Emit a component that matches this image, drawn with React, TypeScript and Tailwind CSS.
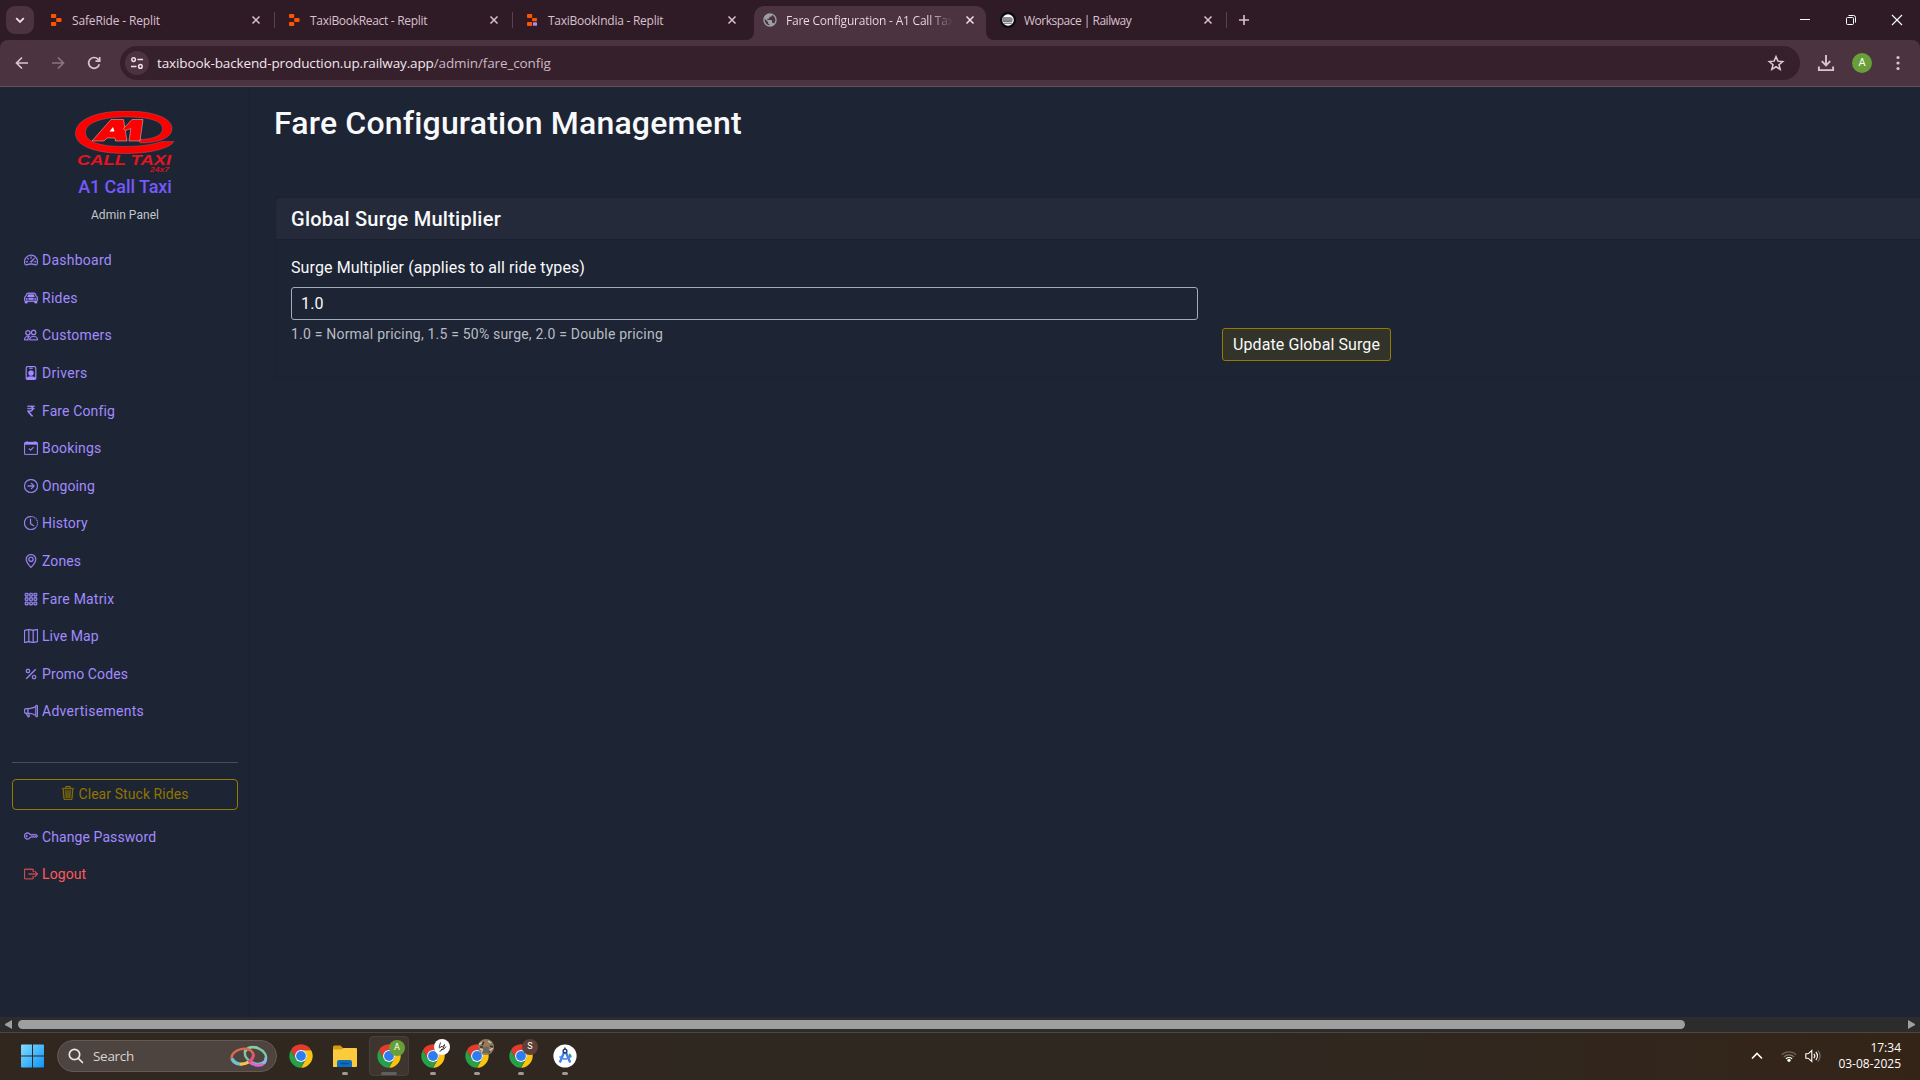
import type { ReactNode } from "react";
import type { IconType } from "react-icons";
import {
  BsArrowRightCircle,
  BsBoxArrowRight,
  BsCalendarCheck,
  BsCarFront,
  BsClockHistory,
  BsCurrencyRupee,
  BsGeoAlt,
  BsGrid3X3Gap,
  BsKey,
  BsMap,
  BsMegaphone,
  BsPeople,
  BsPercent,
  BsPersonBadge,
  BsSpeedometer2,
  BsTrash3,
} from "react-icons/bs";
import { MdPublic } from "react-icons/md";

const navItems: { label: string; icon: IconType; spacing: string }[] = [
  { label: "Dashboard", icon: BsSpeedometer2, spacing: "tracking-[0.25px]" },
  { label: "Rides", icon: BsCarFront, spacing: "tracking-[0.25px]" },
  { label: "Customers", icon: BsPeople, spacing: "tracking-[0.2px]" },
  { label: "Drivers", icon: BsPersonBadge, spacing: "tracking-[0.3px]" },
  { label: "Fare Config", icon: BsCurrencyRupee, spacing: "tracking-[0.12px]" },
  { label: "Bookings", icon: BsCalendarCheck, spacing: "tracking-[0.16px]" },
  { label: "Ongoing", icon: BsArrowRightCircle, spacing: "tracking-[0.1px]" },
  { label: "History", icon: BsClockHistory, spacing: "tracking-[0.2px]" },
  { label: "Zones", icon: BsGeoAlt, spacing: "tracking-[0.1px]" },
  { label: "Fare Matrix", icon: BsGrid3X3Gap, spacing: "tracking-[0.2px]" },
  { label: "Live Map", icon: BsMap, spacing: "tracking-[0.05px]" },
  { label: "Promo Codes", icon: BsPercent, spacing: "tracking-[0.11px]" },
  { label: "Advertisements", icon: BsMegaphone, spacing: "tracking-[0.28px]" },
];

function CloseIcon() {
  return (
    <svg width="16" height="16" viewBox="0 0 16 16" className="shrink-0" fill="none" stroke="currentColor" strokeWidth="1.5">
      <path d="M4.5 4.5l7 7M11.5 4.5l-7 7" />
    </svg>
  );
}

function ReplitIcon({ accent = false }: { accent?: boolean }) {
  return (
    <svg width="16" height="16" viewBox="0 0 16 16" className="shrink-0">
      <rect x="3" y="2" width="5.2" height="4" rx="0.9" fill="#fd5402" />
      <rect x="3" y="10" width="5.2" height="4" rx="0.9" fill="#fd5402" />
      {accent ? (
        <>
          <rect x="8" y="6" width="5" height="3.2" rx="0.9" fill="#fd5402" />
          <rect x="9" y="10.2" width="4" height="3.6" rx="0.6" fill="#a48bf5" />
        </>
      ) : (
        <rect x="8.2" y="6" width="5.3" height="4" rx="0.9" fill="#fd5402" />
      )}
    </svg>
  );
}

function RailwayIcon() {
  return (
    <svg width="16" height="16" viewBox="0 0 16 16" className="shrink-0">
      <circle cx="8" cy="8" r="8" fill="#0d0b10" />
      <circle cx="8" cy="8" r="5.8" fill="#fff" />
      <path d="M3 5h6.500c2.300 0 3.300 1.200 3.300 2.500 0 1.200-1 1.700-2 1.700H2.400C2.100 7.500 2.400 6 3 5z" fill="#8b8b90" />
      <path d="M2.800 9.300h9.500M3.800 11.200h8" fill="none" stroke="#4a4a50" strokeWidth="0.9" />
    </svg>
  );
}

function Tab({ icon, title, spacing }: { icon: ReactNode; title: string; spacing: string }) {
  return (
    <div className="flex w-[238px] items-center">
      <div className="ml-[11px]">{icon}</div>
      <span className={`ml-[8px] flex-1 whitespace-nowrap pt-[2px] ${spacing}`}>{title}</span>
      <CloseIcon />
      <div className="w-[11px]" />
    </div>
  );
}

function Separator() {
  return <div className="-ml-px h-4 w-px shrink-0 bg-[#57434d]" />;
}

function TabStrip() {
  return (
    <div className="flex h-10 items-center bg-[#2e1b25] font-['Open_Sans','Noto_Sans',sans-serif] text-[12px] text-[#dcc0cf]">
      <div className="ml-1.5 flex h-7 w-7 items-center justify-center rounded-[9px] bg-[#4b3440] text-[#f1dfe8]">
        <svg width="12" height="12" viewBox="0 0 12 12" fill="none" stroke="currentColor" strokeWidth="1.8">
          <path d="M2.2 4.2L6 8l3.800-3.800" />
        </svg>
      </div>
      <div className="w-[3px]" />
      <Tab icon={<ReplitIcon />} title="SafeRide - Replit" spacing="tracking-[-0.15px]" />
      <Separator />
      <Tab icon={<ReplitIcon />} title="TaxiBookReact - Replit" spacing="tracking-[-0.3px]" />
      <Separator />
      <Tab icon={<ReplitIcon accent />} title="TaxiBookIndia - Replit" spacing="tracking-[-0.25px]" />
      <div className="-ml-[5px] -mr-[5px] flex h-10 w-[248px] shrink-0 items-end">
        <svg width="8" height="8" viewBox="0 0 8 8" className="shrink-0">
          <path d="M8 0v8H0a8 8 0 0 0 8-8z" fill="#4b3440" />
        </svg>
        <div className="flex h-[34px] w-[232px] items-center rounded-t-[10px] bg-[#4b3440] pb-[7px] pt-[1px] text-[#f1dfe8]">
          <MdPublic size={16} className="ml-2 shrink-0 text-[#9aa0a6]" />
          <span className="ml-[8px] mr-[9px] flex-1 overflow-hidden whitespace-nowrap bg-gradient-to-r from-[#f1dfe8] from-85% to-transparent bg-clip-text pt-[2px] tracking-[-0.22px] text-transparent">
            Fare Configuration - A1 Call Taxi
          </span>
          <CloseIcon />
          <div className="w-2" />
        </div>
        <svg width="8" height="8" viewBox="0 0 8 8" className="shrink-0">
          <path d="M0 0v8h8a8 8 0 0 1-8-8z" fill="#4b3440" />
        </svg>
      </div>
      <Tab icon={<RailwayIcon />} title="Workspace | Railway" spacing="tracking-[-0.5px]" />
      <Separator />
      <svg width="16" height="16" viewBox="0 0 16 16" className="ml-[9px]" fill="none" stroke="currentColor" strokeWidth="1.6">
        <path d="M8 3v10M3 8h10" />
      </svg>
      <div className="ml-auto flex text-white">
        <div className="flex w-[46px] justify-center">
          <svg width="12" height="12" viewBox="0 0 12 12" fill="none" stroke="currentColor">
            <path d="M1 5.500h10" />
          </svg>
        </div>
        <div className="flex w-[46px] justify-center">
          <svg width="12" height="12" viewBox="0 0 12 12" fill="none" stroke="currentColor">
            <rect x="1.500" y="3.500" width="7" height="7" rx="1" />
            <path d="M3.500 1.500h5a2 2 0 0 1 2 2v5" />
          </svg>
        </div>
        <div className="flex w-[46px] justify-center">
          <svg width="12" height="12" viewBox="0 0 12 12" fill="none" stroke="currentColor" strokeWidth="1.100">
            <path d="M1 1l10 10M11 1L1 11" />
          </svg>
        </div>
      </div>
    </div>
  );
}

function Toolbar() {
  return (
    <div className="bg-[#2e1b25]">
      <div className="flex h-[47px] items-center rounded-t-[8px] border-b border-[#62515b] bg-[#4b3440] text-[#dfc2d1]">
        <svg width="16" height="16" viewBox="0 0 16 16" className="ml-[14px]" fill="none" stroke="currentColor" strokeWidth="1.700">
          <path d="M14 8H2.500M8 2.500L2.500 8 8 13.500" />
        </svg>
        <svg width="16" height="16" viewBox="0 0 16 16" className="ml-5 text-[#8b7480]" fill="none" stroke="currentColor" strokeWidth="1.700">
          <path d="M2 8h11.500M8 2.500L13.500 8 8 13.500" />
        </svg>
        <svg width="16" height="16" viewBox="0 0 16 16" className="ml-5" fill="none" stroke="currentColor" strokeWidth="1.700">
          <path d="M13.300 9.200A5.400 5.400 0 1 1 12 4.200l1.500 1.500" />
          <path d="M13.700 2v4.200H9.500" />
        </svg>
        <div className="ml-[18px] flex h-[34px] w-[1680px] items-center rounded-full bg-[#35202b]">
          <div className="ml-[5px] flex h-6 w-6 items-center justify-center rounded-full bg-[#4b3440] text-[#f1dfe8]">
            <svg width="14" height="14" viewBox="0 0 14 14" fill="none" stroke="currentColor" strokeWidth="1.500">
              <circle cx="3.600" cy="3.600" r="1.800" />
              <path d="M7.500 3.600H13M1 10.400h5.500" />
              <circle cx="10.400" cy="10.400" r="1.800" />
            </svg>
          </div>
          <span className="ml-2 font-['Open_Sans','Noto_Sans',sans-serif] text-[13.500px] tracking-[-0.12px] text-[#f3e6ed]">
            taxibook-backend-production.up.railway.app<span className="text-[#cdb8c3]">/admin/fare_config</span>
          </span>
          <svg width="18" height="18" viewBox="0 0 24 24" className="ml-auto mr-[15px]" fill="none" stroke="#dccbd4" strokeWidth="2">
            <path d="M12 3.500l2.500 6 6.500.5-5 4.200 1.600 6.300L12 17l-5.600 3.500L8 14.200 3 10l6.500-.5z" />
          </svg>
        </div>
        <svg width="18" height="18" viewBox="0 0 18 18" className="ml-[17px]" fill="none" stroke="currentColor" strokeWidth="1.900">
          <path d="M9 1v10M4.800 7.200L9 11.400l4.200-4.200M1.900 12.500v3.600h14.200v-3.600" />
        </svg>
        <div className="ml-[17px] flex h-5 w-5 items-center justify-center rounded-full bg-[#689f38] font-['Roboto',sans-serif] text-[11px] text-white">A</div>
        <svg width="4" height="16" viewBox="0 0 4 16" className="ml-6" fill="currentColor">
          <circle cx="2" cy="2.500" r="1.600" />
          <circle cx="2" cy="8" r="1.600" />
          <circle cx="2" cy="13.500" r="1.600" />
        </svg>
      </div>
    </div>
  );
}

function TaxiLogo() {
  return (
    <svg width="100" height="62" viewBox="0 0 100 62" className="shrink-0 font-['Liberation_Sans',Arial,sans-serif]">
      <path
        d="M99 30.500C94 38 74 42.500 51 42.500 20 42.500.5 35 .5 22.500.5 9 20 0 51 0c29 0 46 7.500 46 17.500C97 27 84 32 65 32l-1-3.500c13 0 23.500-3.500 23.500-11C87.500 9.500 73 6 51 6 26 6 10.500 12 10.500 21.500c0 9.500 15.500 14 38.500 14 16 0 29-2 38-5z"
        fill="#fe0000"
        stroke="#99a"
        strokeWidth="0.300"
      />
      <path d="M17 30L36 8.500h12.500L52 30H40.500L40 27h-8l-3 3z" fill="#fe0000" stroke="#fff" strokeWidth="0.400" />
      <path d="M34.500 20.500l3.500-4.500 1.500 4.500z" fill="#fff" />
      <path d="M48.500 17.500L57 8.500h11L65 30H54l1.800-12.500-5 2z" fill="#fe0000" stroke="#fff" strokeWidth="0.400" />
      <text x="2" y="54.300" fontSize="14" fontWeight="700" fontStyle="italic" textLength="94" lengthAdjust="spacingAndGlyphs" fill="#e5141e">
        CALL TAXI
      </text>
      <text x="75" y="61" fontSize="6.500" fontWeight="700" fontStyle="italic" textLength="19" lengthAdjust="spacingAndGlyphs" fill="#d0141e">
        24x7
      </text>
    </svg>
  );
}

const iconClass = "mb-px stroke-current [stroke-width:0.35px]";

function Sidebar() {
  return (
    <aside className="flex w-[250px] shrink-0 flex-col border-r border-[#1a202d] text-[14px] text-[#a18bff]">
      <div className="flex flex-col items-center pl-px pt-6">
        <TaxiLogo />
        <div className="mt-[2px] text-[18px] font-medium leading-[24px] tracking-[-0.07px] text-[#7459fb]">A1 Call Taxi</div>
        <div className="mt-[7px] text-[12px] leading-[18px] tracking-[0.04px] text-[#c3c6cc]">Admin Panel</div>
      </div>
      <nav className="mt-[18px]">
        {navItems.map(({ label, icon: Icon, spacing }) => (
          <a key={label} className="flex h-[37.600px] items-center pl-6">
            <Icon size={14} className={iconClass} />
            <span className={`ml-1 ${spacing}`}>{label}</span>
          </a>
        ))}
      </nav>
      <div className="ml-3 mr-[11px] mt-[31px] h-px shrink-0 bg-[#474d5a]" />
      <button className="ml-3 mr-[11px] mt-4 flex h-[31px] items-center justify-center rounded-[4px] border border-[#977b00] text-[#8f7500]">
        <BsTrash3 size={14} className="mb-[3px] stroke-current [stroke-width:0.35px]" />
        <span className="ml-[3px] tracking-[0.07px]">Clear Stuck Rides</span>
      </button>
      <a className="mt-[9px] flex h-[37px] items-center pl-6">
        <BsKey size={14} className="mb-[2px] stroke-current [stroke-width:0.35px]" />
        <span className="ml-1 tracking-[0.09px]">Change Password</span>
      </a>
      <a className="flex h-[37.600px] items-center pl-6 text-[#ff5a5a]">
        <BsBoxArrowRight size={14} className="mb-px text-[#d94e55] stroke-current [stroke-width:0.35px]" />
        <span className="ml-1 tracking-[0.1px]">Logout</span>
      </a>
    </aside>
  );
}

function FareConfigPage() {
  return (
    <main className="min-w-0 flex-1 pl-[25px] pt-[16px] text-[#f8f9fb]">
      <h1 className="-ml-px text-[32px] font-medium leading-[40px] tracking-[0.18px]">Fare Configuration Management</h1>
      <section className="mt-[54px] h-[181px] rounded-l-[4px] border border-r-0 border-[#1b212f]">
        <header className="flex h-[42px] items-center rounded-tl-[4px] border-b border-[#1b212f] bg-[#242a39] pl-[15px]">
          <h2 className="text-[20px] font-medium tracking-[0.26px]">Global Surge Multiplier</h2>
        </header>
        <div className="flex items-start pl-[15px] pt-[16px]">
          <div className="w-[907px]">
            <label className="block text-[16px] leading-6 tracking-[0.1px]">Surge Multiplier (applies to all ride types)</label>
            <div className="mt-[7px] flex h-[33px] items-center rounded-[3px] border border-[#a3adba] pl-[9px] pt-px text-[16px] tracking-[0.2px]">1.0</div>
            <div className="mt-1 text-[14px] leading-[21px] tracking-[0.2px] text-[#b9bcc3]">
              1.0 = Normal pricing, 1.5 = 50% surge, 2.0 = Double pricing
            </div>
          </div>
          <button className="ml-6 mt-[72px] flex h-[33px] w-[169px] items-center justify-center rounded-[3px] border border-[#977b00] bg-[#333429] pt-px text-[16px] tracking-[0.09px]">
            Update Global Surge
          </button>
        </div>
      </section>
    </main>
  );
}

function HorizontalScrollbar() {
  return (
    <div className="flex h-[15px] shrink-0 items-center bg-[#2c2c2c] text-[#9f9f9f]">
      <svg width="7" height="9" viewBox="0 0 7 9" className="ml-[5px]" fill="currentColor">
        <path d="M7 0v9L.4 5.200a.9.9 0 0 1 0-1.400z" />
      </svg>
      <div className="ml-[6px] h-[9px] w-[1667px] rounded-full bg-[#9f9f9f]" />
      <svg width="7" height="9" viewBox="0 0 7 9" className="ml-auto mr-[5px]" fill="currentColor">
        <path d="M0 0v9l6.600-3.800a.9.9 0 0 0 0-1.400z" />
      </svg>
    </div>
  );
}

function ChromeLogo() {
  return (
    <svg width="24" height="24" viewBox="1.500 1.500 45 45">
      <path d="M4.950 13A22 22 0 0 1 43.050 13H24A11 11 0 0 0 14.470 29.500Z" fill="#e33b2e" />
      <path d="M43.050 13A22 22 0 0 1 24 46L33.530 29.500A11 11 0 0 0 24 13Z" fill="#fcc40f" />
      <path d="M24 46A22 22 0 0 1 4.950 13L14.470 29.500A11 11 0 0 0 33.530 29.500Z" fill="#27a048" />
      <circle cx="24" cy="24" r="11.200" fill="#fff" />
      <circle cx="24" cy="24" r="9.200" fill="#2f7bf0" />
    </svg>
  );
}

function TaskbarApp({ children, badge, state = "idle" }: { children: ReactNode; badge?: ReactNode; state?: "idle" | "open" | "active" }) {
  return (
    <div
      className={`relative mr-1 flex h-10 w-10 items-center justify-center rounded-[4px] ${state === "active" ? "border border-[#48403a] bg-[#3d352e]" : ""}`}
    >
      {children}
      {badge}
      {state === "active" && <div className="absolute bottom-0 h-[3px] w-4 rounded-full bg-[#605f60]" />}
      {state === "open" && <div className="absolute bottom-[1px] h-[3px] w-[6px] rounded-full bg-[#a09a95]" />}
    </div>
  );
}

const badgeClass = "absolute right-[3px] top-[3px] flex h-4 w-4 items-center justify-center rounded-full font-['Roboto',sans-serif] text-[9px] text-white";

function Taskbar() {
  return (
    <div className="flex h-12 shrink-0 items-center border-t border-[#4a4641] bg-gradient-to-r from-[#31271f] via-[#2e2821] via-60% to-[#342418] pb-px font-['Open_Sans','Noto_Sans',sans-serif]">
      <svg width="24" height="24" viewBox="0 0 24 24" className="ml-[21px]">
        <defs>
          <linearGradient id="win" x1="0" y1="0" x2="1" y2="1">
            <stop offset="0" stopColor="#84dcff" />
            <stop offset="1" stopColor="#0a95f8" />
          </linearGradient>
        </defs>
        <path d="M0 1.500A1 1 0 0 1 1 .5h10v11H0zM12 .5h10a1 1 0 0 1 1 1v10H12zM0 12.500h11v11H1a1 1 0 0 1-1-1zM12 12.500h11v10a1 1 0 0 1-1 1H12z" fill="url(#win)" />
      </svg>
      <div className="ml-3 flex h-8 w-[220px] items-center rounded-full border border-[#635a54] bg-[#4d443f]">
        <svg width="16" height="16" viewBox="0 0 16 16" className="ml-[10px]" fill="none" stroke="#e8e5e3" strokeWidth="1.700">
          <circle cx="6.500" cy="6.500" r="5.200" />
          <path d="M10.300 10.300L14.500 14.500" strokeLinecap="round" />
        </svg>
        <span className="ml-[9px] text-[13.500px] tracking-[-0.300px] text-[#d8d4d1]">Search</span>
        <svg width="38" height="22" viewBox="0 0 38 22" className="mb-px ml-auto mr-[8px]" fill="none">
          <ellipse cx="25.500" cy="10.500" rx="11" ry="7.800" transform="rotate(22 25.500 10.500)" stroke="#79c7a6" strokeWidth="2.400" />
          <path d="M14.500 7.500c2-5.500 8.500-7 14-4" stroke="#8fc89b" strokeWidth="2.400" />
          <path d="M19.500 17c4.500 3.500 10 4 13.500 2" stroke="#d667d6" strokeWidth="3.200" />
          <path d="M33 19c2.500-1.500 3-4 2.500-6.500" stroke="#8fb5ef" strokeWidth="2.600" />
          <ellipse cx="12.500" cy="11.500" rx="11" ry="7.500" transform="rotate(-12 12.500 11.500)" stroke="#d96a4f" strokeWidth="2.400" />
          <path d="M2 13.500c1.500 3.500 4.500 5 7.500 5.500" stroke="#63c6dd" strokeWidth="3.200" />
          <path d="M9.500 19c3.500.3 6.500-.5 9-2" stroke="#f0c64e" strokeWidth="3.200" />
          <path d="M18.500 17c3.500-2.200 5.300-5 4.800-8" stroke="#e7507c" strokeWidth="3" />
        </svg>
      </div>
      <div className="ml-1 flex">
        <TaskbarApp>
          <ChromeLogo />
        </TaskbarApp>
        <TaskbarApp state="open">
          <svg width="24" height="24" viewBox="0 0 24 24">
            <path d="M0 3a1.500 1.500 0 0 1 1.500-1.500h6L10 4v3H0z" fill="#d79a13" />
            <path d="M0 5.500h8.500L10.500 4H23a1 1 0 0 1 1 1v17a1 1 0 0 1-1 1H0z" fill="#fccb3d" />
            <path d="M4 23v-5a2 2 0 0 1 2-2h11a2 2 0 0 1 2 2v5z" fill="#0f6fbd" />
            <path d="M7.500 19.500h8" stroke="#0a4f90" strokeWidth="1.400" strokeLinecap="round" />
          </svg>
        </TaskbarApp>
        <TaskbarApp state="active" badge={<div className={`${badgeClass} bg-[#689f38]`}>A</div>}>
          <ChromeLogo />
        </TaskbarApp>
        <TaskbarApp
          state="open"
          badge={
            <div className={`${badgeClass} bg-white`}>
              <svg width="12" height="12" viewBox="0 0 12 12" fill="none" stroke="#222" strokeWidth="0.9">
                <path d="M4.500 1.500L3 6.500c1 1 2-.5 2.500-1.500-.2 1.500.8 2 3-1.500-.5 3-2 6-5 7M5 8.500c2 .5 4-1 5-3" />
              </svg>
            </div>
          }
        >
          <ChromeLogo />
        </TaskbarApp>
        <TaskbarApp
          state="open"
          badge={
            <div className={`${badgeClass} overflow-hidden bg-[#8d7a62]`}>
              <svg width="16" height="16" viewBox="0 0 16 16" fill="none">
                <path d="M1 5l3-1M2 10l3 1M10 2l3 2M11 12l4-3M3 13l3-2" stroke="#d8c8a8" strokeWidth="1.400" />
                <path d="M4 6l2-3M12 7l3 1M2 8h3M10 14l2-2" stroke="#3d3026" strokeWidth="1.400" />
                <circle cx="8" cy="5" r="2" fill="#a87455" />
                <path d="M5.500 8h5l1 6h-7z" fill="#6f665f" />
              </svg>
            </div>
          }
        >
          <ChromeLogo />
        </TaskbarApp>
        <TaskbarApp state="open" badge={<div className={`${badgeClass} bg-[#5d4037]`}>S</div>}>
          <ChromeLogo />
        </TaskbarApp>
        <TaskbarApp state="open">
          <svg width="24" height="24" viewBox="0 0 24 24" fill="none">
            <circle cx="12" cy="12" r="11.600" fill="#fff" />
            <path d="M16 9.500a3 3 0 0 1 2.500 4l-3-.5z" fill="#34a853" />
            <path d="M11.200 8L6.800 18.500M12.800 8l4.400 10.500" stroke="#3d82f0" strokeWidth="2.400" />
            <path d="M6.500 12.500c3 3.500 8 3.500 11 0" stroke="#4a8bf2" strokeWidth="1.800" />
            <circle cx="12" cy="7" r="1.900" fill="#dfe9fb" stroke="#1d3557" strokeWidth="1.300" />
            <path d="M12 3.500v2" stroke="#1d3557" strokeWidth="1.400" />
          </svg>
        </TaskbarApp>
      </div>
      <div className="ml-auto mr-[19px] flex items-center text-white">
        <svg width="12" height="8" viewBox="0 0 12 8" fill="none" stroke="currentColor" strokeWidth="1.600">
          <path d="M1 6.500l5-5 5 5" />
        </svg>
        <svg width="16" height="12" viewBox="0 0 16 12" className="ml-[18px]" fill="none" strokeWidth="1.300">
          <path d="M.8 4.800a10.200 10.200 0 0 1 14.400 0" stroke="#6c6058" />
          <path d="M2.900 6.900a7.200 7.200 0 0 1 10.200 0" stroke="#85796f" />
          <path d="M4.900 8.900a4.400 4.400 0 0 1 6.200 0" stroke="#fff" />
          <circle cx="8" cy="10.300" r="1.600" fill="#fff" />
        </svg>
        <svg width="16" height="14" viewBox="0 0 16 14" className="ml-2" fill="none" stroke="currentColor" strokeWidth="1.100">
          <path d="M.8 4.800h2.400L6.800 1.500v11L3.200 9.200H.8z" />
          <path d="M8.800 4.800a3.200 3.200 0 0 1 0 4.400M10.800 3a5.700 5.700 0 0 1 0 8" />
          <path d="M12.800 1.300a8.200 8.200 0 0 1 0 11.400" stroke="#80746a" />
        </svg>
        <div className="ml-[17px] text-right text-[12px] leading-4">
          <div>17:34</div>
          <div>03-08-2025</div>
        </div>
      </div>
    </div>
  );
}

export default function App() {
  return (
    <div className="flex h-[1080px] w-[1920px] flex-col overflow-hidden bg-[#1d2433]">
      <TabStrip />
      <Toolbar />
      <div className="flex min-h-0 flex-1 bg-[#1d2433] font-['Roboto','Noto_Sans',sans-serif]">
        <Sidebar />
        <FareConfigPage />
      </div>
      <HorizontalScrollbar />
      <Taskbar />
    </div>
  );
}
